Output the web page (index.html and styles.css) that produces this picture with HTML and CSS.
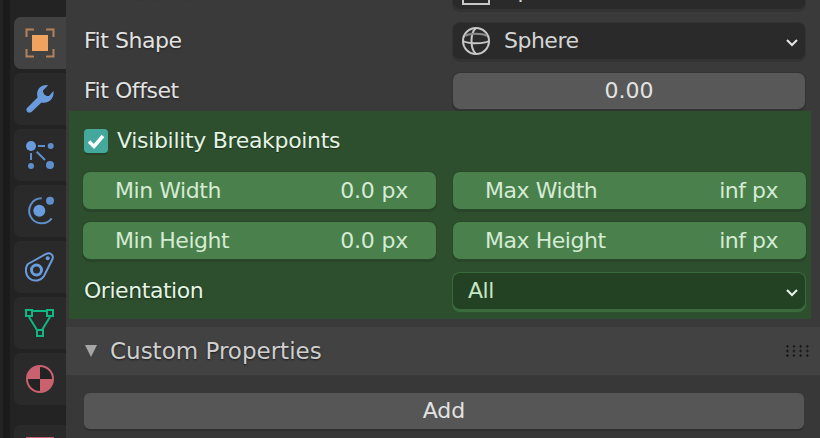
FILE: index.html
```html
<!DOCTYPE html>
<html lang="en">
<head>
    <meta charset="UTF-8">
    <meta name="viewport" content="width=device-width, initial-scale=1.0">
    <title>Properties Editor</title>
    <link rel="stylesheet" href="styles.css">
</head>
<body>

<div class="editor">
    <aside class="sidebar">
        <div class="tab tab-active">
            <svg class="icon" viewBox="0 0 30 30" fill="none">
                <path d="M1.5 9V1.5H9M21 1.5H28.5V9M28.5 21V28.5H21M9 28.5H1.5V21" stroke="#b5815a" stroke-width="2"/>
                <rect x="7" y="7" width="16" height="16" fill="#f0a35e"/>
            </svg>
        </div>
        <div class="tab">
            <svg class="icon" viewBox="0 0 30 30" fill="none">
                <path d="M2 24L12.500 13.500C11 7 14 1 22 1L23 1.500L18 6.500C18 10 20 12 24 12L28.500 7C29.500 14 24 20 16.500 18.500L6.500 28C3 30 0 26.500 2 24Z" fill="#6a9bdc"/>
            </svg>
        </div>
        <div class="tab">
            <svg class="icon" viewBox="0 0 30 30" fill="none">
                <path d="M13 6H20M6 13V20M11.700 11.700L20 20" stroke="#5f8fcb" stroke-width="2"/>
                <circle cx="6" cy="6" r="5" fill="#6a9bdc"/>
                <circle cx="25.700" cy="6" r="3" fill="#5f8fcb"/>
                <circle cx="6" cy="26" r="3" fill="#5f8fcb"/>
                <circle cx="25" cy="25" r="4" fill="#5f8fcb"/>
            </svg>
        </div>
        <div class="tab">
            <svg class="icon" viewBox="0 0 30 30" fill="none">
                <path d="M16.700 2.300A12.500 12.500 0 1 0 26.700 22.300" stroke="#5f8fcb" stroke-width="2"/>
                <circle cx="14.300" cy="14.700" r="6" fill="#6a9bdc"/>
                <circle cx="25" cy="4.700" r="4" fill="#5f8fcb"/>
            </svg>
        </div>
        <div class="tab">
            <svg class="icon" viewBox="0 0 30 30" fill="none">
                <path d="M3 12L21 2C25 0 29 3 27.500 7L19 24C16 29 9 30 4.500 26.500C0 23 0 15 3 12Z" stroke="#6a9bdc" stroke-width="2"/>
                <circle cx="11.500" cy="18" r="5" stroke="#6a9bdc" stroke-width="3"/>
                <circle cx="22.700" cy="6.300" r="2" fill="#6a9bdc"/>
            </svg>
        </div>
        <div class="tab">
            <svg class="icon" viewBox="0 0 30 30" fill="none">
                <path d="M7 3H22M4 9L12 22M25 9L17 22" stroke="#10b783" stroke-width="2"/>
                <rect x="1" y="2" width="6" height="6" stroke="#10b783" stroke-width="2"/>
                <rect x="22" y="2" width="6" height="6" stroke="#10b783" stroke-width="2"/>
                <rect x="12" y="22" width="6" height="6" stroke="#10b783" stroke-width="2"/>
            </svg>
        </div>
        <div class="tab">
            <svg class="icon" viewBox="0 0 30 30" fill="none">
                <circle cx="15" cy="15" r="13" fill="#c9616e" stroke="#c9616e" stroke-width="2"/>
                <path d="M15 3A12 12 0 0 1 27 15H15Z" fill="#232323"/>
                <path d="M15 15H3A12 12 0 0 0 15 27Z" fill="#232323"/>
            </svg>
        </div>
        <div class="tab tab-last">
            <div class="tab-peek"></div>
        </div>
    </aside>

    <main class="content">
        <div class="settings">
            <div class="prop-row">
                <span class="prop-label">Fit Method</span>
                <div class="field select">
                    <svg class="field-icon" viewBox="0 0 28 28" fill="none"><rect x="1" y="1" width="26" height="26" stroke="#c8c8c8" stroke-width="2"/></svg>
                    <span class="field-text">Sphere</span>
                </div>
            </div>
            <div class="prop-row">
                <span class="prop-label">Fit Shape</span>
                <div class="field select">
                    <svg class="field-icon" viewBox="0 0 28 28" fill="none" stroke="#c8c8c8" stroke-width="2">
                        <circle cx="14" cy="14" r="13"/>
                        <path d="M14 1C8 6 8 22 14 27M1 14C6 17 22 17 27 14" />
                        <path d="M3 9C8 6 20 6 25 9" stroke="#8a8a8a"/>
                    </svg>
                    <span class="field-text">Sphere</span>
                    <svg class="chevron" viewBox="0 0 14 10" fill="none"><path d="M2 2L7 7L12 2" stroke="#e6e6e6" stroke-width="2"/></svg>
                </div>
            </div>
            <div class="prop-row">
                <span class="prop-label">Fit Offset</span>
                <div class="field number"><span class="field-num">0.00</span></div>
            </div>
        </div>

        <section class="breakpoints">
            <label class="check-row">
                <span class="checkbox">
                    <svg viewBox="0 0 24 24" fill="none"><path d="M5 12.500L10 17.500L19 7" stroke="#fff" stroke-width="3.500"/></svg>
                </span>
                <span class="check-text">Visibility Breakpoints</span>
            </label>
            <div class="pair-row">
                <div class="slider"><span class="slider-name">Min Width</span><span class="slider-value">0.0 px</span></div>
                <div class="slider"><span class="slider-name">Max Width</span><span class="slider-value value-inf">inf px</span></div>
            </div>
            <div class="pair-row">
                <div class="slider"><span class="slider-name">Min Height</span><span class="slider-value">0.0 px</span></div>
                <div class="slider"><span class="slider-name">Max Height</span><span class="slider-value value-inf">inf px</span></div>
            </div>
            <div class="prop-row green-row">
                <span class="prop-label">Orientation</span>
                <div class="field select select-green">
                    <span class="field-text">All</span>
                    <svg class="chevron" viewBox="0 0 14 10" fill="none"><path d="M2 2L7 7L12 2" stroke="#e6f5e6" stroke-width="2"/></svg>
                </div>
            </div>
        </section>

        <header class="panel-header">
            <span class="arrow"></span>
            <span>Custom Properties</span>
            <span class="grip"></span>
        </header>
        <div class="panel-body">
            <button class="add-btn">Add</button>
        </div>
    </main>
</div>

</body>
</html>
```

FILE: styles.css
```css
html, body {
    margin: 0;
    height: 100%;
    overflow: hidden;
}
body {
    font-family: "DejaVu Sans", sans-serif;
    font-size: 22px;
    color: #e2e2e2;
    background-color: #3a3a3a;
}
.editor {
    display: flex;
    height: 438px;
    overflow: hidden;
}
.sidebar {
    width: 52px;
    flex: none;
    padding: 17px 0 0 14px;
    display: flex;
    flex-direction: column;
    gap: 4px;
    background: linear-gradient(to right, #232323 0, #232323 3px, #1b1b1b 3px, #1b1b1b 10px, #232323 10px);
}
.tab {
    height: 52px;
    flex: none;
    border-radius: 7px 0 0 7px;
    background-color: #2a2a2a;
    display: flex;
    align-items: center;
    justify-content: center;
}
.tab-active {
    background-color: #424242;
}
.tab-last {
    margin-top: 16px;
    align-items: flex-start;
}
.tab-peek {
    width: 28px;
    height: 12px;
    margin-top: 12px;
    background-color: #c9616e;
}
.icon {
    width: 30px;
    height: 30px;
}
.content {
    flex: 1;
    min-width: 0;
    display: flex;
    flex-direction: column;
}
.settings {
    margin-top: -28px;
    padding: 0 15px 0 18px;
    display: flex;
    flex-direction: column;
    gap: 12px;
    height: 139px;
}
.prop-row {
    display: grid;
    grid-template-columns: 369px 352px;
    height: 38px;
    align-items: center;
}
.prop-label {
    color: #e2e2e2;
    letter-spacing: -0.45px;
    padding-bottom: 2px;
    text-shadow: 0 1px 2px rgba(0, 0, 0, 0.5);
}
.field {
    height: 36px;
    border-radius: 7px;
    display: flex;
    align-items: center;
    box-shadow: 0 0 0 1px #333, 0 2px 0 1px #333;
    box-sizing: border-box;
}
.field-text {
    letter-spacing: -0.5px;
    padding-bottom: 2px;
}
.field-num {
    padding-bottom: 2px;
}
.select {
    background-color: #2a2a2a;
    padding: 0 6px 0 9px;
    gap: 14px;
    color: #d4d4d4;
}
.field-icon {
    width: 28px;
    height: 28px;
    flex: none;
}
.chevron {
    width: 14px;
    height: 10px;
    margin-left: auto;
    margin-top: 4px;
}
.number {
    background-color: #585858;
    justify-content: center;
    color: #e2e2e2;
}
.breakpoints {
    margin-left: 3px;
    margin-right: 9px;
    height: 208px;
    flex: none;
    box-sizing: border-box;
    padding: 18px 6px 0 14px;
    background-color: #2d4f2e;
    color: #e4f4e4;
}
.check-row {
    display: flex;
    align-items: center;
    gap: 9px;
    height: 24px;
    margin-left: 1px;
    text-shadow: 0 1px 1px rgba(0, 0, 0, 0.4);
}
.check-text {
    letter-spacing: -0.32px;
    padding-bottom: 2px;
}
.checkbox {
    width: 24px;
    height: 24px;
    border-radius: 4px;
    background-color: #45a89c;
    box-shadow: 0 2px 0 #264328;
    flex: none;
}
.checkbox svg {
    display: block;
}
.pair-row {
    display: grid;
    grid-template-columns: 353px 353px;
    column-gap: 17px;
    margin-top: 13px;
}
.check-row + .pair-row {
    margin-top: 19px;
}
.slider {
    height: 37px;
    box-sizing: border-box;
    padding: 0 28px 0 32px;
    border-radius: 7px;
    background-color: #4a804b;
    color: #d4ebd4;
    display: flex;
    align-items: center;
    justify-content: space-between;
    box-shadow: 0 0 0 1px #2a482b, 0 2px 0 1px #284529;
}
.slider-name {
    letter-spacing: -0.45px;
}
.slider-value {
    letter-spacing: -0.2px;
}
.value-inf {
    letter-spacing: -0.5px;
}
.green-row {
    grid-template-columns: 369px 352px;
    margin-top: 13px;
    margin-left: 1px;
}
.green-row .prop-label {
    color: #e4f4e4;
}
.select-green {
    background-color: #234123;
    color: #c6e6c6;
    padding-left: 15px;
    box-shadow: 0 0 0 1px #3a6a3b, 0 2px 0 1px #3a6a3b;
}
.panel-header {
    margin-top: 8px;
    height: 48px;
    flex: none;
    display: flex;
    align-items: center;
    padding: 0 9px 0 19px;
    background-color: #424242;
    color: #cfcfcf;
    font-size: 23px;
    text-shadow: 0 1px 2px rgba(0, 0, 0, 0.6);
}
.arrow {
    width: 0;
    height: 0;
    border-left: 6px solid transparent;
    border-right: 6px solid transparent;
    border-top: 12px solid #a6a6a6;
    margin-right: 13px;
}
.grip {
    margin-left: auto;
    width: 27px;
    height: 14px;
    background-image: radial-gradient(circle, #151515 0, #151515 1px, transparent 1.3px);
    background-size: 6.67px 4.67px;
}
.panel-body {
    flex: 1;
    background-color: #383838;
    padding: 18px 16px 0 18px;
}
.add-btn {
    display: block;
    width: 100%;
    height: 36px;
    padding: 0 0 2px;
    border: none;
    border-radius: 6px;
    font: inherit;
    color: #e2e2e2;
    background-color: #565656;
    box-shadow: 0 2px 0 #2f2f2f;
}
```
